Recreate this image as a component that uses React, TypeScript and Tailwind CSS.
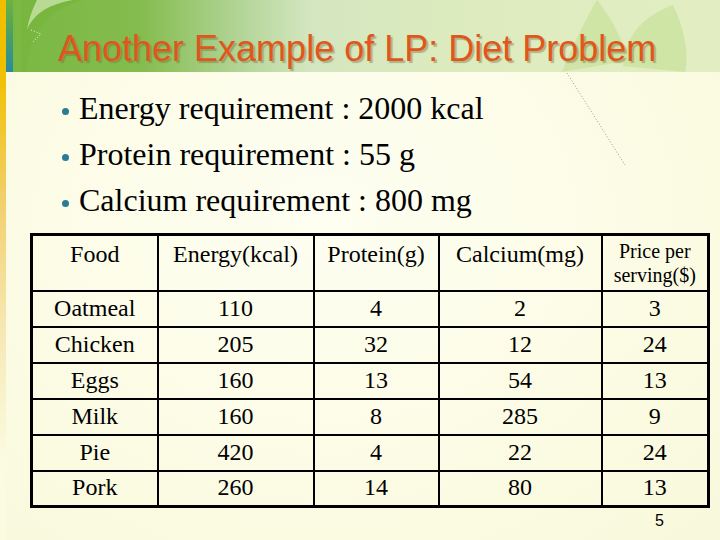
import React from "react";

const rows: string[][] = [
  ["Oatmeal", "110", "4", "2", "3"],
  ["Chicken", "205", "32", "12", "24"],
  ["Eggs", "160", "13", "54", "13"],
  ["Milk", "160", "8", "285", "9"],
  ["Pie", "420", "4", "22", "24"],
  ["Pork", "260", "14", "80", "13"],
];

const bullets = [
  "Energy requirement : 2000 kcal",
  "Protein requirement : 55 g",
  "Calcium requirement : 800 mg",
];

export default function App() {
  return (
    <div className="w-[720px] h-[540px] relative overflow-hidden flex bg-[radial-gradient(ellipse_at_45%_40%,#fefef2_0%,#fbfbe2_70%,#f8f8dc_100%)]">
      {/* left yellow stripe */}
      <div className="w-[6px] h-full bg-[linear-gradient(to_bottom,#f0c000_0px,#f0c000_72px,#f2cf6a_200px,#f6e7b0_320px,#fbfbe2_460px)]" />
      <div className="flex-1 flex flex-col">
        {/* header */}
        <div className="h-[72px] flex relative">
          <div className="w-[7px] h-full bg-[linear-gradient(to_bottom,#6db33f_0%,#4ea060_45%,#2a8aa2_100%)]" />
          <div className="flex-1 h-full relative bg-[linear-gradient(to_right,#7bb843_0%,#84bc4e_18%,#b2d496_32%,#d4e6c0_42%,#dcebbe_60%,#e2eec2_100%)]">
            <svg className="absolute inset-0" width="707" height="72" viewBox="0 0 707 72">
              <path d="M14 72 C 14 40, 30 10, 70 0 L 8 0 L 8 72 Z" fill="#78b640" />
              <path d="M14 30 C 20 14, 36 4, 60 0 L 24 0 C 20 8, 16 18, 14 30 Z" fill="#c8e4a6" opacity="0.8" />
              <path d="M18 30 L 28 34 L 20 42" fill="none" stroke="#e8f4d8" strokeWidth="1" strokeDasharray="1 2" />
              <path d="M549 72 C 560 45, 575 15, 584 0 C 600 20, 612 45, 614 60 C 600 64, 570 68, 549 72 Z" fill="#cbe29f" opacity="0.8" />
              <path d="M610 66 C 612 40, 625 18, 660 5 C 672 30, 676 55, 672 72 Z" fill="#cbe29f" opacity="0.8" />
            </svg>
            <div className="relative pl-[45px] pt-[29px] text-[36px] leading-[40px] text-[#e0561c] [font-family:'Liberation_Sans',Arial,sans-serif] [text-shadow:2px_2px_1px_rgba(120,110,60,0.45)] whitespace-nowrap">
              Another Example of LP: Diet Problem
            </div>
          </div>
        </div>
        {/* body */}
        <div className="flex-1 relative [font-family:'Liberation_Serif','Times_New_Roman',serif] text-black">
          <svg className="absolute left-[555px] top-0" width="70" height="100" viewBox="0 0 70 100">
            <path d="M6 1 L 64 93" stroke="#9a9a88" strokeWidth="1" strokeDasharray="1 2" fill="none" />
          </svg>
          <div className="pt-[13px] flex flex-col">
            {bullets.map((b) => (
              <div key={b} className="h-[46px] flex items-center">
                <span className="ml-[56px] mt-[6px] w-[7px] h-[7px] rounded-full bg-[#2a7c96]" />
                <span className="ml-[10px] text-[32px] whitespace-nowrap">{b}</span>
              </div>
            ))}
          </div>
          <table className="ml-[24px] mt-[10px] w-[677px] border-collapse border-[3px] border-black text-[24px] table-fixed">
            <colgroup>
              <col className="w-[126px]" />
              <col className="w-[156px]" />
              <col className="w-[125px]" />
              <col className="w-[163px]" />
              <col className="w-[107px]" />
            </colgroup>
            <thead>
              <tr className="h-[56px]">
                {["Food", "Energy(kcal)", "Protein(g)", "Calcium(mg)"].map((h) => (
                  <th key={h} className="border-2 border-black font-normal align-top pt-[3px] leading-[30px]">
                    {h}
                  </th>
                ))}
                <th className="border-2 border-black font-normal text-[20px] leading-[24px] align-middle">
                  Price per
                  <br />
                  serving($)
                </th>
              </tr>
            </thead>
            <tbody>
              {rows.map((r) => (
                <tr key={r[0]} className="h-[36px]">
                  {r.map((c, i) => (
                    <td key={i} className="border-2 border-black text-center leading-[30px] p-0 pb-[2px]">
                      {c}
                    </td>
                  ))}
                </tr>
              ))}
            </tbody>
          </table>
          <div className="absolute left-[649px] top-[437px] text-[16px] [font-family:'Liberation_Sans',Arial,sans-serif]">5</div>
        </div>
      </div>
    </div>
  );
}
